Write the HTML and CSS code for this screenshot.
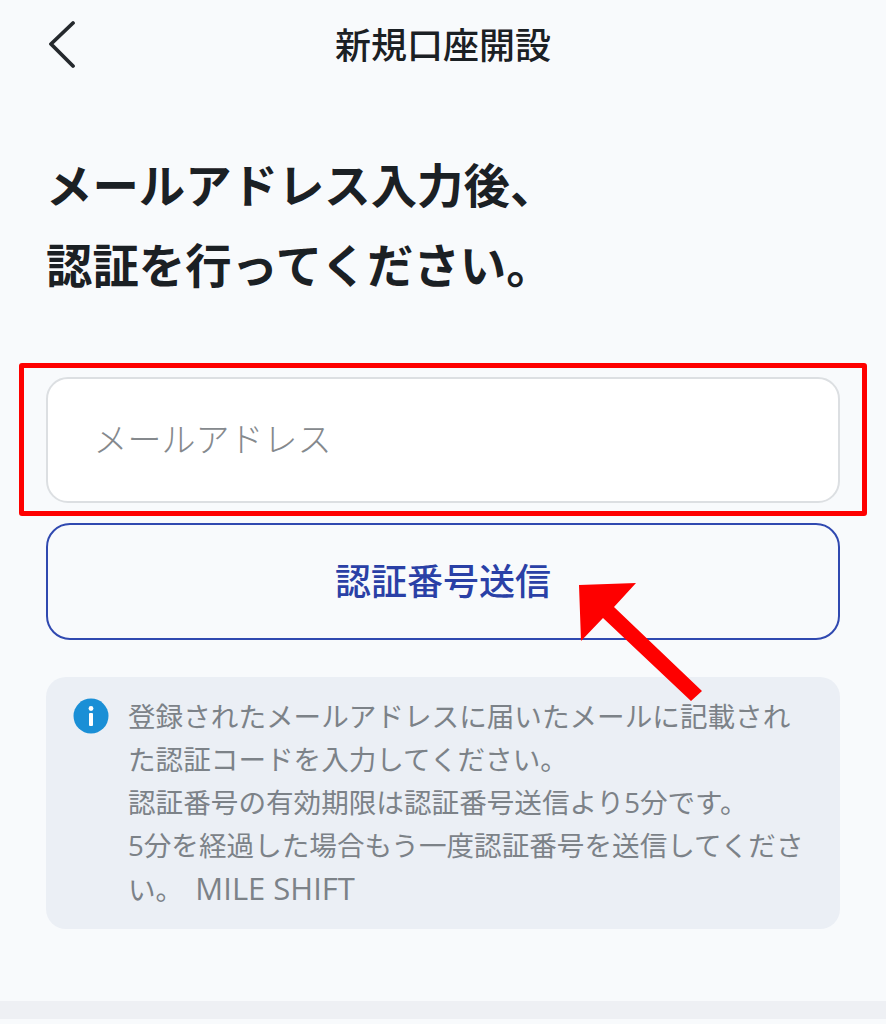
FILE: index.html
```html
<!DOCTYPE html>
<html lang="ja">
<head>
<meta charset="utf-8">
<title>新規口座開設</title>
<link rel="stylesheet" href="styles.css">
</head>
<body>
<div class="page">
  <header class="topbar">
    <button class="back" aria-label="戻る">
      <svg class="back-icon" viewBox="0 0 28 50" width="28" height="50"><path d="M24 3 L2 24 L24 46" fill="none" stroke="#25292d" stroke-width="3.8" stroke-linecap="round" stroke-linejoin="round"/></svg>
    </button>
    <h1 class="title">新規口座開設</h1>
  </header>
  <h2 class="heading">メールアドレス入力後、<br>認証を行ってください。</h2>
  <div class="highlight">
    <div class="field"><span class="placeholder">メールアドレス</span></div>
  </div>
  <button class="send"><span class="send-label">認証番号送信</span></button>
  <section class="info">
    <svg class="info-icon" viewBox="0 0 36 36" width="36" height="36"><circle cx="18" cy="18" r="17.5" fill="#1a8fd6"/><circle cx="18" cy="10.5" r="2.4" fill="#fff"/><rect x="16" y="15" width="4" height="13" rx="1" fill="#fff"/></svg>
    <p class="info-text">登録されたメールアドレスに届いたメールに記載された認証コードを入力してください。<br>認証番号の有効期限は認証番号送信より5分です。<br>5分を経過した場合もう一度認証番号を送信してください。 <span class="brand">MILE SHIFT</span></p>
  </section>
  <div class="bottom-bar"></div>
  <svg class="arrow" viewBox="0 0 886 1024" width="886" height="1024"><polygon points="579,585 636,583 614,607 702,691 691,701 603,618 581,641" fill="#fe0000"/></svg>
</div>
</body>
</html>
```
FILE: styles.css
```css
* { box-sizing: border-box; }
html, body { margin: 0; padding: 0; }
body {
  background: #f8fafc;
  font-family: "Noto Sans CJK JP", "Noto Sans", sans-serif;
  color: #1b2024;
}
.page {
  position: relative;
  width: 886px;
  height: 1024px;
  overflow: hidden;
  display: flex;
  flex-direction: column;
}
.topbar {
  position: relative;
  height: 90px;
  padding-bottom: 4px;
  display: flex;
  align-items: center;
  justify-content: center;
}
.back {
  position: absolute;
  left: 49px;
  top: 20px;
  padding: 0;
  border: 0;
  background: none;
  line-height: 0;
}
.title {
  margin: 0;
  font-size: 36px;
  font-weight: 500;
  line-height: 52px;
}
.heading {
  margin: 53px 0 0 46px;
  font-size: 46.4px;
  font-weight: 700;
  line-height: 80px;
}
.highlight {
  margin: 60px 19px 0;
  height: 153px;
  border: 5.4px solid #fe0000;
  padding: 9px 21.6px 7.6px;
  border-radius: 3px;
}
.field {
  height: 126px;
  background: #fff;
  border: 2px solid #dcdfe2;
  border-radius: 22px;
  display: flex;
  align-items: center;
  padding-left: 46px;
  padding-bottom: 6px;
  font-size: 34px;
  font-weight: 300;
  color: #85898d;
}
.send {
  display: block;
  width: 794px;
  margin: 7px 46px 0;
  height: 117px;
  padding: 0 0 6px;
  background: transparent;
  border: 2px solid #3049b0;
  border-radius: 24px;
  font-family: inherit;
  font-size: 36px;
  font-weight: 500;
  color: #2a40a6;
}
.info {
  margin: 37px 46px 0;
  height: 252px;
  background: #ebeff5;
  border-radius: 20px;
  display: flex;
  align-items: flex-start;
  padding: 18px 28px 0 27px;
  gap: 19px;
}
.info-icon { flex: none; margin-top: 3px; }
.info-text {
  margin: 0;
  font-family: "Open Sans", "Noto Sans CJK JP", sans-serif;
  font-size: 27.6px;
  line-height: 43px;
  color: #7c8288;
}
.brand {
  margin-left: 5px;
  font-size: 31px;
}
.bottom-bar {
  margin-top: 72px;
  height: 18px;
  background: #eef0f4;
}
.arrow {
  position: absolute;
  left: 0;
  top: 0;
  pointer-events: none;
}
```
